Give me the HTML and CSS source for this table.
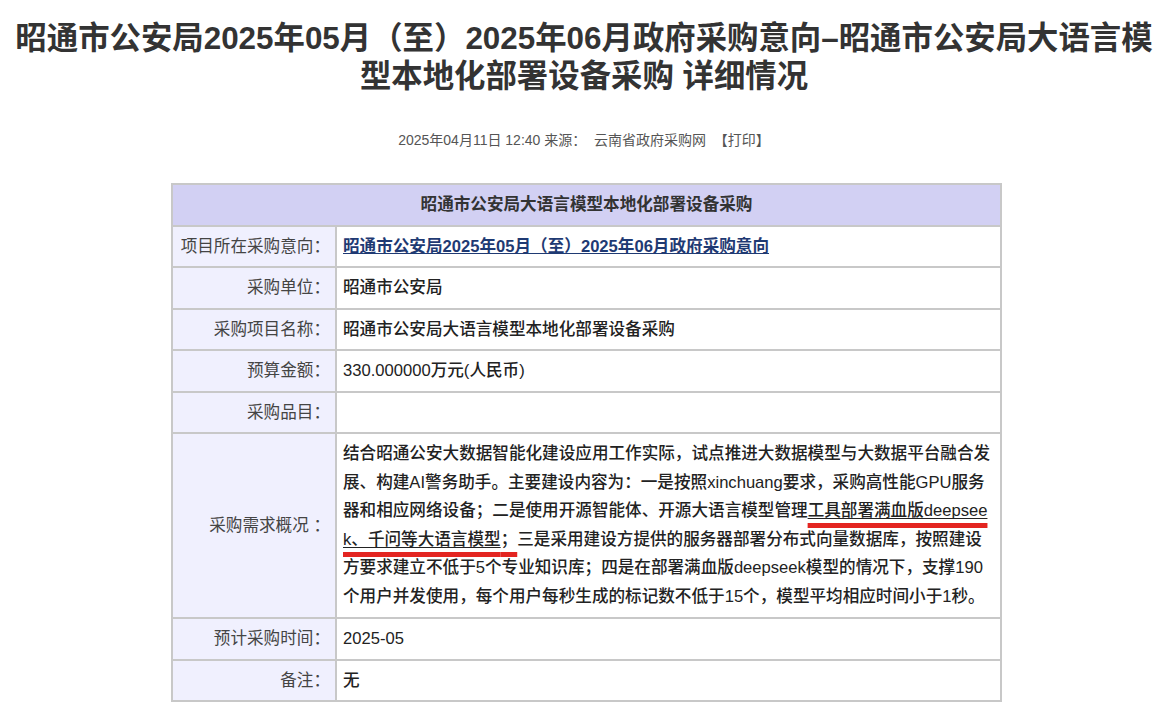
FILE: index.html
```html
<!DOCTYPE html>
<html lang="zh-CN">
<head>
<meta charset="utf-8">
<title>详细情况</title>
<link rel="stylesheet" href="styles.css">
</head>
<body>
<div class="page">
  <h1 class="title">昭通市公安局2025年05月（至）2025年06月政府采购意向–昭通市公安局大语言模型本地化部署设备采购 详细情况</h1>
  <div class="meta">2025年04月11日 12:40 来源：&nbsp;&nbsp;云南省政府采购网&nbsp;&nbsp;【打印】</div>
  <table class="info">
    <tr><th colspan="2" class="head">昭通市公安局大语言模型本地化部署设备采购</th></tr>
    <tr><td class="label">项目所在采购意向：</td><td class="value"><a class="link" href="#">昭通市公安局2025年05月（至）2025年06月政府采购意向</a></td></tr>
    <tr><td class="label">采购单位：</td><td class="value">昭通市公安局</td></tr>
    <tr><td class="label">采购项目名称：</td><td class="value">昭通市公安局大语言模型本地化部署设备采购</td></tr>
    <tr><td class="label">预算金额：</td><td class="value">330.000000万元(人民币)</td></tr>
    <tr><td class="label">采购品目：</td><td class="value"></td></tr>
    <tr><td class="label">采购需求概况 ：</td><td class="value desc">结合昭通公安大数据智能化建设应用工作实际，试点推进大数据模型与大数据平台融合发展、构建AI警务助手。主要建设内容为：一是按照xinchuang要求，采购高性能GPU服务器和相应网络设备；二是使用开源智能体、开源大语言模型管理<span class="mark"><span class="ul">工具部署满血版deepseek、千问等大语言模型</span>；</span>三是采用建设方提供的服务器部署分布式向量数据库，按照建设方要求建立不低于5个专业知识库；四是在部署满血版deepseek模型的情况下，支撑190个用户并发使用，每个用户每秒生成的标记数不低于15个，模型平均相应时间小于1秒。</td></tr>
    <tr><td class="label">预计采购时间：</td><td class="value">2025-05</td></tr>
    <tr><td class="label">备注：</td><td class="value">无</td></tr>
  </table>
</div>
</body>
</html>
```

FILE: styles.css
```css
html, body {
  margin: 0;
  padding: 0;
  background: #ffffff;
}
body {
  font-family: "Liberation Sans", "Noto Sans CJK SC", sans-serif;
  color: #333;
}
.page {
  padding-top: 20px;
}
.title {
  margin: 0;
  font-size: 31.4px;
  line-height: 38px;
  font-weight: 700;
  color: #333;
  text-align: center;
  padding: 0 8px;
}
.meta {
  margin-top: 34px;
  text-align: center;
  font-size: 14px;
  line-height: 20px;
  color: #555;
}
.info {
  margin: 33px 0 0 171px;
  width: 831px;
  border-collapse: collapse;
  border: 2px solid #c8c8c8;
  border-top-color: #dedede;
  font-size: 16.6px;
}
.info th, .info td {
  border: 2px solid #c8c8c8;
  padding: 7px 6px;
  line-height: 25.5px;
}
.info .head {
  background: #d2d0f3;
  font-weight: 700;
  color: #333;
  text-align: center;
}
.info .label {
  width: 151px;
  background: #f0f0fe;
  text-align: right;
  color: #444;
  padding-right: 5px;
  white-space: nowrap;
}
.info .value {
  background: #fff;
  color: #222;
  font-weight: 500;
  padding-left: 6px;
}
.link {
  color: #1f3a73;
  font-weight: 600;
  text-decoration: underline;
}
.info .desc {
  line-height: 28.5px;
  padding-top: 6px;
  padding-bottom: 6px;
  word-break: break-all;
}
.mark {
  text-decoration: underline;
  text-decoration-color: #e32521;
  text-decoration-thickness: 5px;
  text-underline-offset: 7px;
  text-decoration-skip-ink: none;
}
.ul {
  text-decoration: underline;
  text-decoration-color: #222;
  text-decoration-thickness: 1px;
  text-underline-offset: 2px;
  text-decoration-skip-ink: none;
}
```
